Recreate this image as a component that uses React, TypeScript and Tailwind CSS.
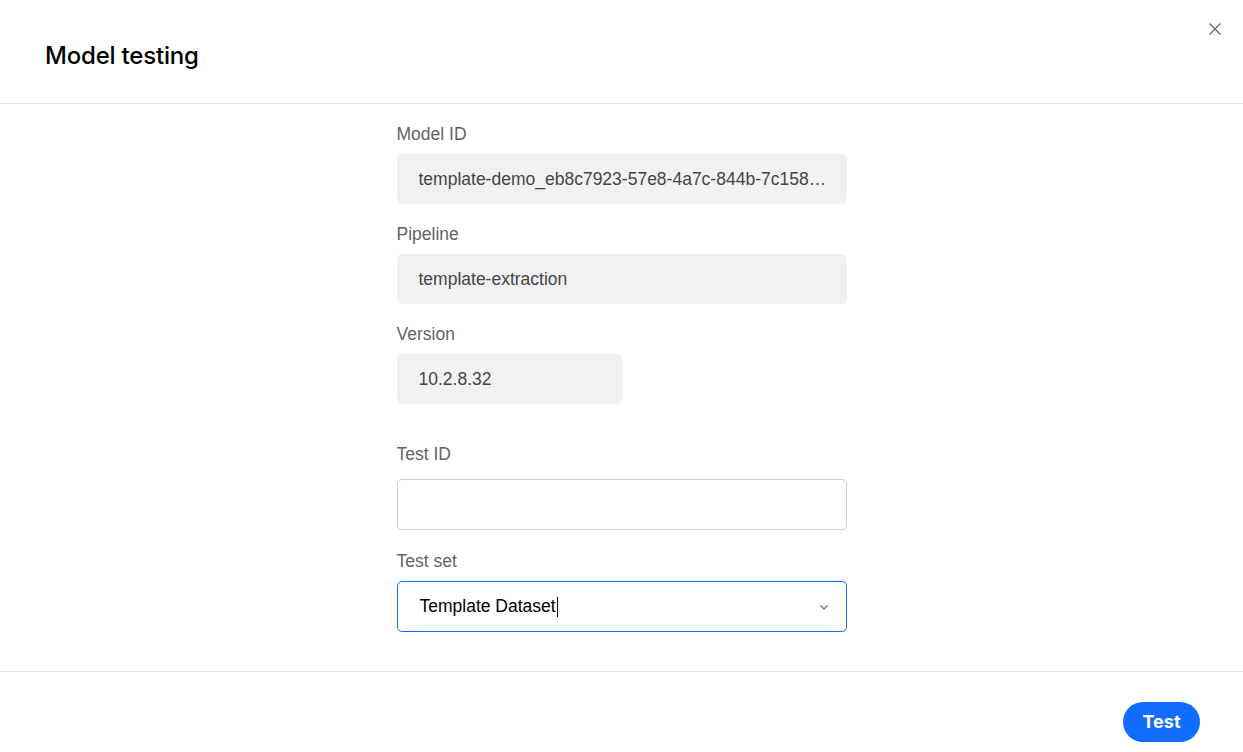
import React from "react";

const labelCls = "block text-[17.5px] leading-[20px] text-[#5f6369]";
const readOnlyCls =
  "flex h-[50px] items-center rounded-[5px] bg-[#f1f1f1] pl-[22px] pr-[10px] text-[17.5px] text-[#454545] whitespace-nowrap";

const ReadOnlyField = ({ label, value, width }: { label: string; value: string; width: string }) => {
  return (
    <div>
      <span className={labelCls}>{label}</span>
      <div className={`mt-[10px] ${readOnlyCls} ${width}`}>
        <span>{value}</span>
      </div>
    </div>
  );
};

const App = () => {
  return (
    <div
      className="flex h-[752px] w-[1243px] flex-col bg-white"
      style={{ fontFamily: '"Liberation Sans", Arial, sans-serif' }}
    >
      <header className="relative flex h-[104px] shrink-0 items-center border-b border-[#e5e5e5] pl-[45px] pt-[8px]">
        <h1
          className="text-[24px] font-medium tracking-[-0.2px] text-black"
          style={{ fontFamily: 'Inter, "Open Sans", sans-serif' }}
        >
          Model testing
        </h1>
        <button className="absolute right-[21px] top-[21px] flex h-[15px] w-[15px] items-center justify-center text-[#6b6b6b]">
          <svg width="14" height="14" viewBox="0 0 14 14" fill="none" stroke="currentColor" strokeWidth="1.4">
            <path d="M1.5 1.5l11 11M12.5 1.5l-11 11" />
          </svg>
        </button>
      </header>

      <main className="flex flex-1 justify-center pt-[20px]">
        <div className="w-[450px]">
          <ReadOnlyField
            label="Model ID"
            value="template-demo_eb8c7923-57e8-4a7c-844b-7c158…"
            width="w-full"
          />
          <div className="mt-[20px]">
            <ReadOnlyField label="Pipeline" value="template-extraction" width="w-full" />
          </div>
          <div className="mt-[20px]">
            <ReadOnlyField label="Version" value="10.2.8.32" width="w-[225px]" />
          </div>

          <div className="mt-[40px]">
            <span className={labelCls}>Test ID</span>
            <input
              className="mt-[15px] h-[51px] w-full rounded-[5px] border border-[#cfcfcf] bg-white px-[22px] text-[17.5px] outline-none"
              type="text"
            />
          </div>

          <div className="mt-[21px]">
            <span className={labelCls}>Test set</span>
            <div className="mt-[10px] flex h-[51px] w-full items-center justify-between rounded-[5px] border border-[#116dff] bg-white pl-[22px] pr-[16px]">
              <span className="flex items-center text-[17.5px] text-black">
                Template Dataset
                <span className="ml-[1px] inline-block h-[20px] w-[1px] bg-black" />
              </span>
              <svg width="12" height="12" viewBox="0 0 12 12" fill="none" stroke="#7a7a7a" strokeWidth="1.4">
                <path d="M2.5 4.5L6 8l3.5-3.5" />
              </svg>
            </div>
          </div>
        </div>
      </main>

      <footer className="flex h-[81px] shrink-0 items-start justify-end border-t border-[#e5e5e5] pr-[43px] pt-[30px]">
        <button
          className="h-[40px] w-[77px] rounded-full bg-[#116dff] pb-[2px] text-[18px] font-bold text-white"
          style={{ fontFamily: 'Inter, "Open Sans", sans-serif' }}
        >
          Test
        </button>
      </footer>
    </div>
  );
};

export default App;
